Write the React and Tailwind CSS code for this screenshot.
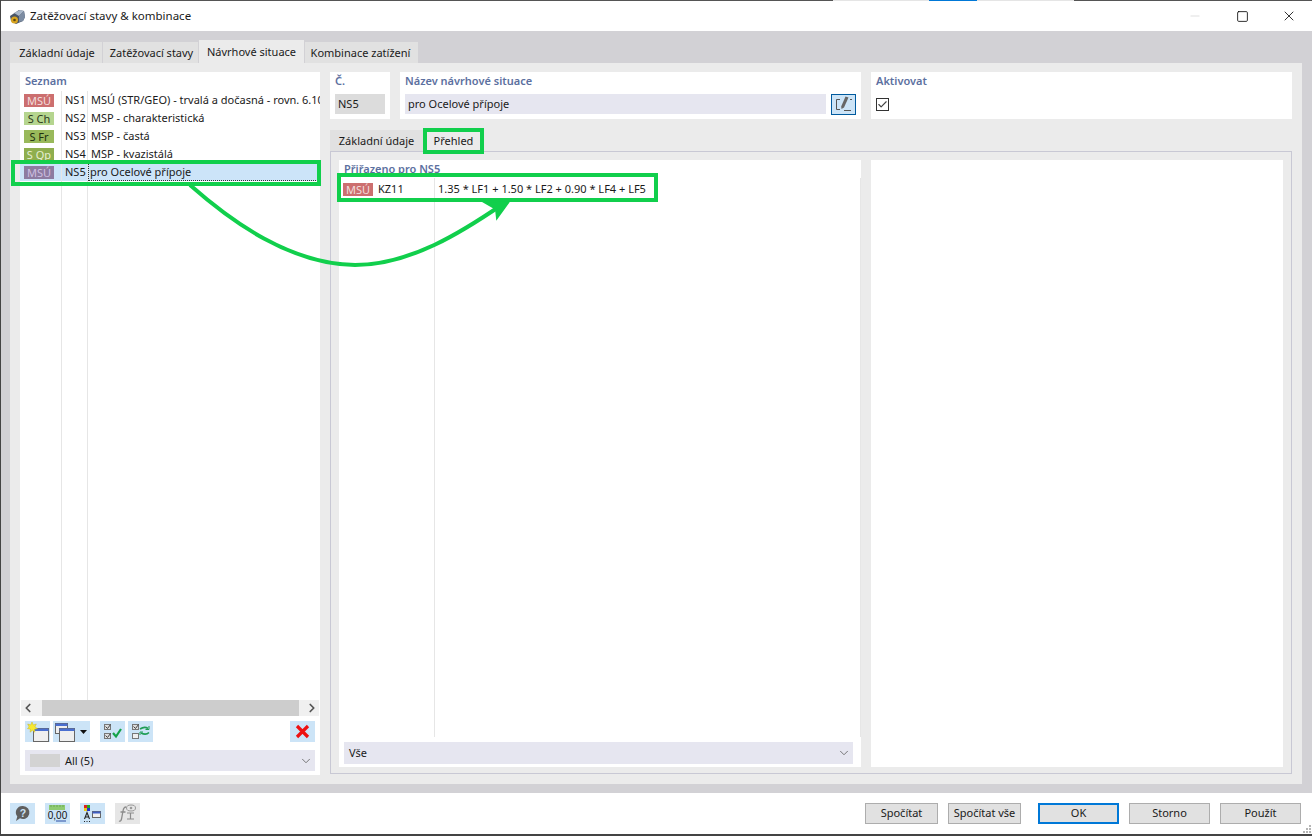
import { ChevronDown, ChevronLeft, ChevronRight, Check, Minus, Square, X } from "lucide-react";

const listRows = [
  ["MSÚ", "bg-[#cc6f6f] text-[#f3dede]", "NS1", "MSÚ (STR/GEO) - trvalá a dočasná - rovn. 6.10"],
  ["S Ch", "bg-[#b5d58f] text-[#2c3a1c]", "NS2", "MSP - charakteristická"],
  ["S Fr", "bg-[#99b95b] text-[#22300f]", "NS3", "MSP - častá"],
  ["S Qp", "bg-[#8fae4e] text-[#e6efd4]", "NS4", "MSP - kvazistálá"],
  ["MSÚ", "bg-[#8d7ba0] text-[#cdbfe0]", "NS5", "pro Ocelové přípoje"],
];

const topTabs = ["Základní údaje", "Zatěžovací stavy", "Návrhové situace", "Kombinace zatížení"];

function Label({ children, className = "" }) {
  return <div className={`text-[11px] leading-[14px] font-semibold text-[#5c70a0] ${className}`}>{children}</div>;
}

function Badge({ text, color }) {
  return (
    <div className={`w-[30px] h-[13px] flex items-center justify-center text-[11px] leading-none ${color}`}>{text}</div>
  );
}

function WindowIcon({ x, y, w = 15, h = 13 }) {
  return (
    <g>
      <rect x={x} y={y} width={w} height={h} fill="#efefef" stroke="#666" />
      <rect x={x} y={y} width={w} height="2.500" fill="#4a6fd0" />
    </g>
  );
}

function NewIcon() {
  return (
    <svg width="25" height="21" viewBox="0 0 25 21">
      <WindowIcon x={8.500} y={7.500} />
      <path d="M7 1l1.300 3 3-1-1.400 3 2.600 1.600-3 .6.400 3-2.400-2-2.400 2 .4-3-3-.6L4.100 6 2.700 3l3 1z" fill="#f7e932" stroke="#c9b71e" strokeWidth="0.5" />
    </svg>
  );
}

function CopyIcon() {
  return (
    <svg width="37" height="21" viewBox="0 0 37 21">
      <WindowIcon x={2.500} y={2.500} w={12} h={10} />
      <WindowIcon x={6.500} y={7.500} />
      <path d="M27 9h7l-3.500 4z" fill="#111" />
    </svg>
  );
}

function CheckAllIcon() {
  return (
    <svg width="25" height="21" viewBox="0 0 25 21">
      <rect x="4.500" y="3.500" width="6" height="5" fill="#ddd" stroke="#777" />
      <rect x="4.500" y="12.500" width="6" height="5" fill="#ddd" stroke="#777" />
      <path d="M5.500 5.500l2 2 3-4M5.500 14.500l2 2 3-4" fill="none" stroke="#444" />
      <path d="M13 12l3 3.500L21 8" fill="none" stroke="#14a34a" strokeWidth="2.200" />
    </svg>
  );
}

function SwapIcon() {
  return (
    <svg width="25" height="21" viewBox="0 0 25 21">
      <rect x="4.500" y="3.500" width="6" height="5" fill="#ddd" stroke="#777" />
      <rect x="4.500" y="12.500" width="6" height="5" fill="#eee" stroke="#777" />
      <path d="M5.500 5.500l2 2 3-4" fill="none" stroke="#444" />
      <path d="M12 8c3-2 6-2 8-.5M13 12c3 1.500 6 1.500 8-.5" fill="none" stroke="#1f9d55" strokeWidth="1.600" />
      <path d="M21 5v3.500h-3.500M12 14v-3h3" fill="none" stroke="#1f9d55" strokeWidth="1" />
    </svg>
  );
}

function DeleteIcon() {
  return (
    <svg width="25" height="21" viewBox="0 0 25 21">
      <path d="M7 5l11 11M18 5L7 16" stroke="#ee1111" strokeWidth="3.200" />
    </svg>
  );
}

function HelpIcon() {
  return (
    <svg width="25" height="21" viewBox="0 0 25 21">
      <path d="M13 3a6.500 6.500 0 1 1-3 12.300L6 18l1.300-4.500A6.500 6.500 0 0 1 13 3z" fill="#5f5f5f" />
      <text x="13" y="13.500" textAnchor="middle" fontSize="10.500" fontWeight="700" fill="#cce4f7" fontFamily="Liberation Sans, sans-serif">?</text>
    </svg>
  );
}

function UnitsIcon() {
  return (
    <svg width="25" height="21" viewBox="0 0 25 21">
      <rect x="4" y="2" width="16" height="5" fill="#8ecb72" />
      <path d="M6 2v2M9 2v2M12 2v2M15 2v2M18 2v2" stroke="#6aa756" />
      <text x="12.500" y="16" textAnchor="middle" fontSize="10" fill="#111" fontFamily="Liberation Sans, sans-serif">0,00</text>
      <path d="M11 18h10" stroke="#2c4fa3" />
    </svg>
  );
}

function ColorsIcon() {
  return (
    <svg width="25" height="21" viewBox="0 0 25 21">
      <rect x="4" y="2" width="3" height="3" fill="#d22" />
      <rect x="7" y="2" width="3" height="3" fill="#2a2" />
      <rect x="4" y="5" width="3" height="3" fill="#e7c81a" />
      <rect x="7" y="5" width="3" height="3" fill="#23c" />
      <rect x="12.500" y="8.500" width="8" height="6" fill="#f0f0f0" stroke="#666" />
      <rect x="12.500" y="8.500" width="8" height="2" fill="#3f5fc4" />
      <path d="M4.500 16l2.500-6.500L9.500 16M5.500 14h3" fill="none" stroke="#222" strokeWidth="1.100" />
      <path d="M4 18.500h1M6.500 18.500h1M9 18.500h1" stroke="#222" />
    </svg>
  );
}

function FormulaIcon() {
  return (
    <svg width="25" height="21" viewBox="0 0 25 21">
      <path d="M11 4c-2 0-2.500 1-3 4l-1.500 8c-.5 2-1.500 2.500-2.500 2M5.500 9h5" fill="none" stroke="#8c8c8c" strokeWidth="1.300" />
      <ellipse cx="16" cy="5" rx="4.500" ry="3" fill="none" stroke="#999" />
      <circle cx="16" cy="5" r="1.300" fill="#999" />
      <path d="M12 10h7M15.500 10v6M12 16h7" fill="none" stroke="#8c8c8c" strokeWidth="1.200" />
    </svg>
  );
}

function EditIcon() {
  return (
    <svg width="23" height="19" viewBox="0 0 23 19">
      <path d="M8 4.500H4.500v10H8M12 15.500h7" fill="none" stroke="#555" />
      <path d="M13.500 1.500l3 1L12 12.500l-2.500 1.500-.3-2.500z" fill="#666" />
      <path d="M18 4.500h2" stroke="#555" />
    </svg>
  );
}

function AppIcon() {
  return (
    <svg width="17" height="17" viewBox="0 0 17 17">
      <path d="M1 8l9-6 5 1 1 6-2 4-7 3-5-3z" fill="#4a5668" />
      <path d="M5 5l6-3 4 1-5 5z" fill="#a9b7c9" />
      <path d="M10 8l5-5 1 6-2 4-4 1z" fill="#7c8ca2" />
      <circle cx="5.500" cy="12" r="3.500" fill="#d9a520" />
      <circle cx="5.500" cy="12" r="1.300" fill="#5b4610" />
    </svg>
  );
}

function ToolButton({ children, className = "bg-[#cce4f7]" }) {
  return <button className={`h-[21px] flex items-center justify-center ${className}`}>{children}</button>;
}

function Combo({ children, className = "" }) {
  return (
    <div className={`h-[21px] bg-[#e6e6f0] flex items-center justify-between text-[11px] ${className}`}>
      {children}
      <ChevronDown className="w-[14px] h-[14px] mr-[2px] text-[#666]" strokeWidth={1.500} />
    </div>
  );
}

function SideList() {
  return (
    <div className="flex-1 flex min-h-0 text-[11px] text-[#1a1a1a]">
      <div className="w-[42px] border-r border-[#e6e6e6] flex flex-col">
        {listRows.map((row, i) => (
          <div key={row[2]} className={`h-[18px] pl-[4px] flex items-center ${i === 4 ? "bg-[#cce4f9]" : ""}`}>
            <Badge text={row[0]} color={row[1]} />
          </div>
        ))}
      </div>
      <div className="w-[26px] border-r border-[#e6e6e6] flex flex-col">
        {listRows.map((row, i) => (
          <div key={row[2]} className={`h-[18px] pl-[3px] flex items-center ${i === 4 ? "bg-[#cce4f9]" : ""}`}>
            {row[2]}
          </div>
        ))}
      </div>
      <div className="flex-1 min-w-0 flex flex-col overflow-hidden">
        {listRows.map((row, i) => (
          <div
            key={row[2]}
            className={`h-[18px] flex items-center whitespace-nowrap ${
              i === 4 ? "bg-[#cce4f9] border border-dotted border-[#333] pl-[1px]" : "pl-[3px]"
            }`}
          >
            {row[3]}
          </div>
        ))}
      </div>
    </div>
  );
}

function LeftPanel() {
  return (
    <div className="w-[300px] bg-white flex flex-col">
      <Label className="pl-[5px] pt-[2px] h-[19px] flex items-start">Seznam</Label>
      <SideList />
      <div className="h-[16px] mx-[1px] bg-[#f0f0f0] flex items-center justify-between">
        <ChevronLeft className="w-[14px] h-[14px] text-[#555]" strokeWidth={3} />
        <div className="w-[257px] h-[16px] bg-[#cdcdcd] ml-[3px] mr-[3px]" />
        <ChevronRight className="w-[14px] h-[14px] text-[#555]" strokeWidth={3} />
      </div>
      <div className="h-[21px] mt-[5px] mx-[5px] flex justify-between">
        <div className="flex">
          <ToolButton className="w-[25px] bg-[#cce4f7]"><NewIcon /></ToolButton>
          <ToolButton className="w-[37px] ml-[3px] bg-[#cce4f7]"><CopyIcon /></ToolButton>
          <ToolButton className="w-[25px] ml-[10px] bg-[#cce4f7]"><CheckAllIcon /></ToolButton>
          <ToolButton className="w-[25px] ml-[3px] bg-[#cce4f7]"><SwapIcon /></ToolButton>
        </div>
        <ToolButton className="w-[25px] bg-[#cce4f7]"><DeleteIcon /></ToolButton>
      </div>
      <Combo className="mx-[5px] mt-[8px] mb-[4px]">
        <div className="flex items-center">
          <div className="w-[30px] h-[13px] ml-[5px] bg-[#d3d3d3]" />
          <span className="ml-[5px] pt-[1px] text-[#1a1a1a]">All (5)</span>
        </div>
      </Combo>
    </div>
  );
}

function HeaderFields() {
  return (
    <div className="h-[47px] flex gap-[10px]">
      <div className="w-[60px] bg-white px-[5px]">
        <Label className="h-[22px] pt-[2px] flex items-start">Č.</Label>
        <div className="h-[20px] bg-[#dcdcdc] pl-[3px] flex items-center text-[11px] text-[#1a1a1a]">NS5</div>
      </div>
      <div className="w-[461px] bg-white px-[5px]">
        <Label className="h-[22px] pt-[2px] flex items-start">Název návrhové situace</Label>
        <div className="flex gap-[5px]">
          <div className="flex-1 h-[20px] bg-[#e6e6f0] pl-[3px] flex items-center text-[11px] text-[#1a1a1a]">pro Ocelové přípoje</div>
          <div className="w-[25px] h-[21px] bg-[#cce4f7] border border-[#005a9e] flex items-center justify-center"><EditIcon /></div>
        </div>
      </div>
      <div className="flex-1 bg-white px-[5px]">
        <Label className="h-[22px] pt-[2px] flex items-start">Aktivovat</Label>
        <div className="w-[13px] h-[13px] mt-[4px] border border-[#333] flex items-center justify-center">
          <Check className="w-[11px] h-[11px] text-[#444]" strokeWidth={2.500} />
        </div>
      </div>
    </div>
  );
}

function OverviewPanel() {
  return (
    <div className="flex-1 mt-[9px] flex flex-col min-h-0">
      <div className="h-[23px] flex items-end text-[11px] text-[#1a1a1a]">
        <div className="w-[93px] h-[21px] pt-[2px] bg-[#e1e1e1] flex items-center justify-center">Základní údaje</div>
        <div className="w-[61px] h-[23px] pt-[3px] bg-[#ebebeb] flex items-center justify-center">Přehled</div>
      </div>
      <div className="flex-1 border border-[#c8c8d4] pt-[8px] px-[8px] pb-[6px] flex gap-[10px] min-h-0 mb-[1px]">
        <div className="w-[522px] bg-white flex flex-col px-[5px]">
          <Label className="h-[18px] pt-[2px] flex items-start">Přiřazeno pro NS5</Label>
          <div className="flex-1 flex text-[11px] text-[#1a1a1a] border-r border-[#e6e6e6] -mr-[5px] pr-[5px]">
            <div className="w-[92px] border-r border-[#e6e6e6] -ml-[1px]">
              <div className="h-[20px] flex items-center gap-[5px] mt-[1px]">
                <Badge text="MSÚ" color="bg-[#cc6f6f] text-[#f3dede]" />
                <span>KZ11</span>
              </div>
            </div>
            <div className="pl-[3px] mt-[1px] h-[20px] flex items-center">1.35 * LF1 + 1.50 * LF2 + 0.90 * LF4 + LF5</div>
          </div>
          <Combo className="mt-[5px] mb-[3px] h-[22px] pl-[5px] text-[#1a1a1a] mr-[3px]">Vše</Combo>
        </div>
        <div className="flex-1 bg-white" />
      </div>
    </div>
  );
}

function Footer() {
  const btn = "h-[21px] bg-[#e1e1e1] border border-[#adadad] flex items-center justify-center";
  return (
    <div className="h-[41px] bg-white flex items-center justify-between pl-[9px] pr-[11px] relative text-[11px] text-[#1a1a1a]">
      <div className="flex gap-[10px]">
        <ToolButton className="w-[25px] bg-[#cce4f7]"><HelpIcon /></ToolButton>
        <ToolButton className="w-[25px] bg-[#cce4f7]"><UnitsIcon /></ToolButton>
        <ToolButton className="w-[25px] bg-[#cce4f7]"><ColorsIcon /></ToolButton>
        <ToolButton className="w-[25px] bg-[#e6e6e6]"><FormulaIcon /></ToolButton>
      </div>
      <div className="flex">
        <button className={`${btn} w-[73px]`}>Spočítat</button>
        <button className={`${btn} w-[73px] ml-[10px]`}>Spočítat vše</button>
        <button className="h-[21px] bg-[#e1e1e1] flex items-center justify-center w-[81px] ml-[17px] border-2 border-[#0078d7]">OK</button>
        <button className={`${btn} w-[81px] ml-[10px]`}>Storno</button>
        <button className={`${btn} w-[81px] ml-[10px]`}>Použít</button>
      </div>
      <div className="absolute right-[1px] bottom-[1px] grid grid-cols-3 gap-[1px]">
        <i /><i /><i className="w-[2px] h-[2px] bg-[#b5b5b5]" />
        <i /><i className="w-[2px] h-[2px] bg-[#b5b5b5]" /><i className="w-[2px] h-[2px] bg-[#b5b5b5]" />
        <i className="w-[2px] h-[2px] bg-[#b5b5b5]" /><i className="w-[2px] h-[2px] bg-[#b5b5b5]" /><i className="w-[2px] h-[2px] bg-[#b5b5b5]" />
      </div>
    </div>
  );
}

function Annotations() {
  return (
    <svg className="absolute -left-px top-0 pointer-events-none" width="1312" height="836" viewBox="0 0 1312 836" fill="none">
      <g stroke="#11cf4c" strokeWidth="4">
        <rect x="13" y="162" width="306" height="22" />
        <rect x="425" y="130" width="57" height="22" />
        <rect x="339" y="175" width="317" height="25" />
        <path d="M190 185C232 222 290 264 355 265C410 265 462 232 503 204" />
      </g>
      <path d="M484 202L510 200L497 218L496 209z" fill="#11cf4c" stroke="#11cf4c" strokeWidth="2" />
    </svg>
  );
}

export default function App() {
  return (
    <div className="relative w-[1312px] h-[836px] overflow-hidden bg-white flex flex-col border-l border-[#444] border-b-2 border-b-[#444] font-['Noto_Sans','Open_Sans',sans-serif]">
      <div className="h-px flex shrink-0">
        <div className="w-[832px] bg-[#555]" />
        <div className="w-[96px] bg-[#e5e5e5]" />
        <div className="w-[48px] bg-[#0078d7]" />
        <div className="w-[97px] bg-[#e5e5e5]" />
        <div className="flex-1 bg-[#555]" />
      </div>
      <div className="h-[30px] shrink-0 flex items-center justify-between pl-[8px] text-[11.5px] text-[#1a1a1a]">
        <div className="flex items-center gap-[4px]">
          <AppIcon />
          <span>Zatěžovací stavy &amp; kombinace</span>
        </div>
        <div className="flex items-center">
          <Minus className="w-[14px] h-[14px] text-[#c8c8c8] mr-[34px]" strokeWidth={1} />
          <Square className="w-[13px] h-[13px] text-black mr-[32px]" strokeWidth={1.500} />
          <X className="w-[16px] h-[16px] text-black mr-[15px]" strokeWidth={1.200} />
        </div>
      </div>
      <div className="flex-1 min-h-0 bg-[#d2d1d5] pl-[9px] pr-[10px] pt-[9px] pb-[9px] flex flex-col">
        <div className="h-[23px] flex items-end text-[11px] text-[#1a1a1a]">
          {topTabs.map((tab, i) => (
            <div
              key={tab}
              className={`flex items-center justify-center pt-[2px] ${
                i === 2 ? "h-[23px] bg-[#ebebeb]" : "h-[21px] bg-[#e1e1e1]"
              } ${i < 2 ? "pl-[2px]" : ""} ${["w-[92px]", "w-[95px]", "w-[105px]", "w-[113px]"][i]} ${i === 3 ? "pr-[2px]" : "mr-px"}`}
            >
              {tab}
            </div>
          ))}
        </div>
        <div className="flex-1 min-h-0 bg-[#ebebeb] p-[9px] pl-[10px] pr-[10px] flex gap-[10px]">
          <LeftPanel />
          <div className="flex-1 min-w-0 flex flex-col">
            <HeaderFields />
            <OverviewPanel />
          </div>
        </div>
      </div>
      <Footer />
      <Annotations />
    </div>
  );
}
